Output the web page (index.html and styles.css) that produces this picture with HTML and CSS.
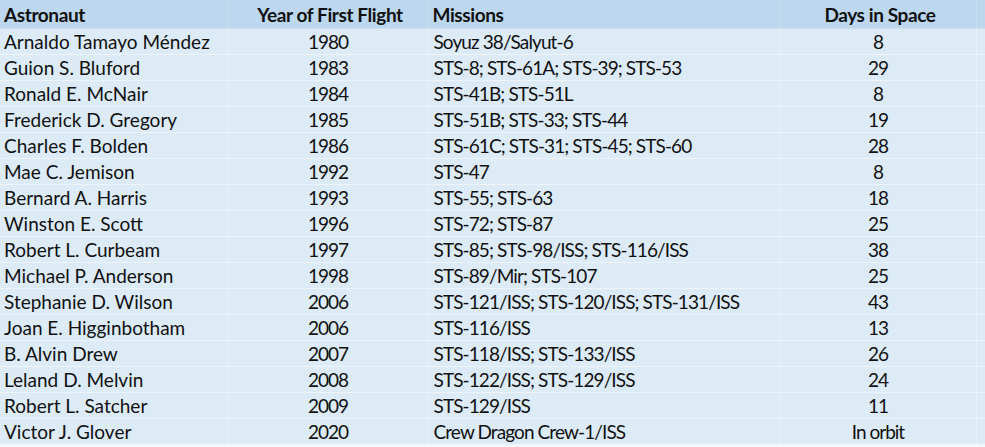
FILE: index.html
```html
<!DOCTYPE html>
<html>
<head>
<meta charset="utf-8">
<link rel="stylesheet" href="styles.css">
</head>
<body>
<table class="grid">
  <colgroup>
    <col class="c-name"><col class="c-year"><col class="c-miss"><col class="c-days"><col class="c-pad">
  </colgroup>
  <thead>
    <tr><th class="left">Astronaut</th><th>Year of First Flight</th><th class="left">Missions</th><th>Days in Space</th><th></th></tr>
  </thead>
  <tbody>
    <tr><td>Arnaldo Tamayo Méndez</td><td class="num">1980</td><td class="miss">Soyuz 38/Salyut-6</td><td class="num">8</td><td></td></tr>
    <tr><td>Guion S. Bluford</td><td class="num">1983</td><td class="miss">STS-8; STS-61A; STS-39; STS-53</td><td class="num">29</td><td></td></tr>
    <tr><td>Ronald E. McNair</td><td class="num">1984</td><td class="miss">STS-41B; STS-51L</td><td class="num">8</td><td></td></tr>
    <tr><td>Frederick D. Gregory</td><td class="num">1985</td><td class="miss">STS-51B; STS-33; STS-44</td><td class="num">19</td><td></td></tr>
    <tr><td>Charles F. Bolden</td><td class="num">1986</td><td class="miss">STS-61C; STS-31; STS-45; STS-60</td><td class="num">28</td><td></td></tr>
    <tr><td>Mae C. Jemison</td><td class="num">1992</td><td class="miss">STS-47</td><td class="num">8</td><td></td></tr>
    <tr><td>Bernard A. Harris</td><td class="num">1993</td><td class="miss">STS-55; STS-63</td><td class="num">18</td><td></td></tr>
    <tr><td>Winston E. Scott</td><td class="num">1996</td><td class="miss">STS-72; STS-87</td><td class="num">25</td><td></td></tr>
    <tr><td>Robert L. Curbeam</td><td class="num">1997</td><td class="miss">STS-85; STS-98/ISS; STS-116/ISS</td><td class="num">38</td><td></td></tr>
    <tr><td>Michael P. Anderson</td><td class="num">1998</td><td class="miss">STS-89/Mir; STS-107</td><td class="num">25</td><td></td></tr>
    <tr><td>Stephanie D. Wilson</td><td class="num">2006</td><td class="miss">STS-121/ISS; STS-120/ISS; STS-131/ISS</td><td class="num">43</td><td></td></tr>
    <tr><td>Joan E. Higginbotham</td><td class="num">2006</td><td class="miss">STS-116/ISS</td><td class="num">13</td><td></td></tr>
    <tr><td>B. Alvin Drew</td><td class="num">2007</td><td class="miss">STS-118/ISS; STS-133/ISS</td><td class="num">26</td><td></td></tr>
    <tr><td>Leland D. Melvin</td><td class="num">2008</td><td class="miss">STS-122/ISS; STS-129/ISS</td><td class="num">24</td><td></td></tr>
    <tr><td>Robert L. Satcher</td><td class="num">2009</td><td class="miss">STS-129/ISS</td><td class="num">11</td><td></td></tr>
    <tr><td>Victor J. Glover</td><td class="num">2020</td><td class="miss">Crew Dragon Crew-1/ISS</td><td class="num">In orbit</td><td></td></tr>
  </tbody>
</table>
</body>
</html>
```
FILE: styles.css
```css
html, body {
  margin: 0;
  padding: 0;
  background: #f4f7fb;
}
.grid {
  border-collapse: collapse;
  table-layout: fixed;
  width: 985px;
  font-family: Lato, "Open Sans", sans-serif;
  font-size: 19px;
  color: #111;
  background: #ddebf7;
}
.c-name { width: 228px; }
.c-year { width: 200px; }
.c-miss { width: 352px; }
.c-days { width: 196px; }
.c-pad { width: 9px; }
.grid th, .grid td {
  padding: 0 0 0 4px;
  white-space: nowrap;
  overflow: hidden;
  border-left: 1px solid #e9f1f9;
  border-bottom: 1px solid #eef4fa;
}
.grid th {
  height: 28px;
  background: #bdd7ee;
  font-weight: 700;
  text-align: center;
  letter-spacing: -0.4px;
  border-left-color: #c6dcf0;
  border-bottom-color: #cfe0f1;
}
.grid th.left { text-align: left; }
.grid td {
  height: 25px;
}
.grid .num {
  text-align: center;
  padding: 0;
  letter-spacing: -1px;
}
.grid .miss {
  padding-left: 5px;
  letter-spacing: -0.9px;
}
.grid tr > :first-child { border-left: none; }
```
